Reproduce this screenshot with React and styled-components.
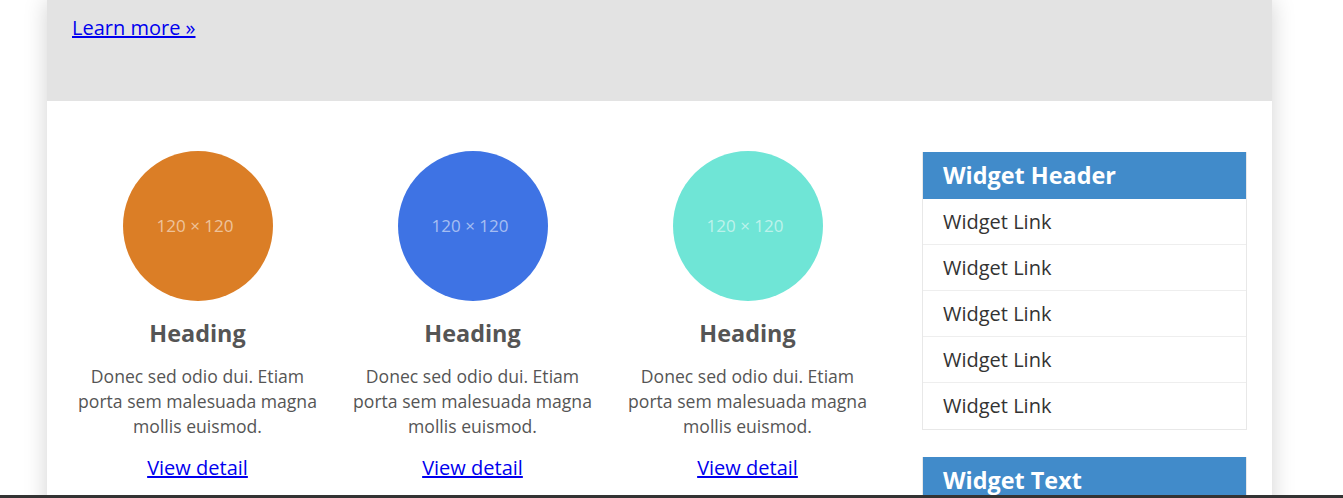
import React from "react";
import styled, { createGlobalStyle } from "styled-components";

const columns = [
	{ color: "#db7e26" },
	{ color: "#3e73e4" },
	{ color: "#6fe5d6" },
];

const links = ["Widget Link", "Widget Link", "Widget Link", "Widget Link", "Widget Link"];

const App = () => {
	return (
		<>
			<GlobalStyle />
			<Page>
				<Jumbotron>
					<JumboLink href="#">Learn more »</JumboLink>
				</Jumbotron>
				<Main>
					<Columns>
						{columns.map((col, i) => (
							<Column key={i}>
								<Placeholder $color={col.color}>120 × 120</Placeholder>
								<Heading>Heading</Heading>
								<Text>
									Donec sed odio dui. Etiam porta sem malesuada magna mollis euismod.
								</Text>
								<DetailLink href="#">View detail</DetailLink>
							</Column>
						))}
					</Columns>
					<Sidebar>
						<Widget>
							<WidgetHeader>Widget Header</WidgetHeader>
							{links.map((l, i) => (
								<WidgetLink key={i} href="#">
									{l}
								</WidgetLink>
							))}
						</Widget>
						<Widget>
							<WidgetHeader>Widget Text</WidgetHeader>
						</Widget>
					</Sidebar>
				</Main>
			</Page>
			<BottomBar />
		</>
	);
};

export default App;

//STYLES
const GlobalStyle = createGlobalStyle`
	body {
		margin: 0;
		background: #fff;
		font-family: "Open Sans", "Noto Sans", Arial, sans-serif;
		overflow: hidden;
	}
`;

const Page = styled.div`
	width: 1225px;
	margin-left: 47px;
	background: #fff;
	box-shadow: 0 0 22px rgba(0, 0, 0, 0.18);
`;

const Jumbotron = styled.div`
	background: #e3e3e3;
	height: 101px;
	padding: 14px 25px 0;
	box-sizing: border-box;
`;

const JumboLink = styled.a`
	font-size: 20px;
	color: #0000ee;
	text-decoration: underline;
`;

const Main = styled.div`
	display: flex;
	align-items: flex-start;
	padding: 50px 25px 40px 13px;
	gap: 37px;
`;

const Columns = styled.div`
	display: flex;
`;

const Column = styled.div`
	width: 275px;
	padding: 0 10px;
	box-sizing: border-box;
	display: flex;
	flex-direction: column;
	align-items: center;
	text-align: center;
`;

const Placeholder = styled.div`
	width: 150px;
	height: 150px;
	border-radius: 50%;
	background: ${(p) => p.$color};
	color: rgba(255, 255, 255, 0.55);
	font-size: 17px;
	line-height: 1;
	padding-right: 5px;
	padding-bottom: 2px;
	box-sizing: border-box;
	display: flex;
	align-items: center;
	justify-content: center;
`;

const Heading = styled.h2`
	margin: 14px 0 0;
	font-size: 23.4px;
	font-weight: 700;
	color: #555;
	line-height: 36px;
`;

const Text = styled.p`
	margin: 13px 0 0;
	font-size: 17.6px;
	line-height: 25px;
	color: #555;
`;

const DetailLink = styled.a`
	margin-top: 15px;
	font-size: 20px;
	color: #0000ee;
	text-decoration: underline;
`;

const Sidebar = styled.div`
	width: 325px;
	display: flex;
	flex-direction: column;
	gap: 27px;
	margin-top: 1px;
`;

const Widget = styled.div`
	border: 1px solid #e8e8e8;
	border-top: none;
	display: flex;
	flex-direction: column;
`;

const WidgetHeader = styled.h3`
	margin: 0;
	background: #418bca;
	color: #fff;
	font-size: 23.4px;
	font-weight: 700;
	height: 47px;
	line-height: 46px;
	padding: 0 20px;
`;

const WidgetLink = styled.a`
	display: block;
	height: 46px;
	line-height: 46px;
	padding: 0 20px;
	font-size: 20px;
	color: #333;
	text-decoration: none;
	border-bottom: 1px solid #eee;
	box-sizing: border-box;

	&:last-child {
		border-bottom: none;
	}
`;

const BottomBar = styled.div`
	position: fixed;
	left: 0;
	right: 0;
	bottom: 0;
	height: 3px;
	background: #333;
`;
